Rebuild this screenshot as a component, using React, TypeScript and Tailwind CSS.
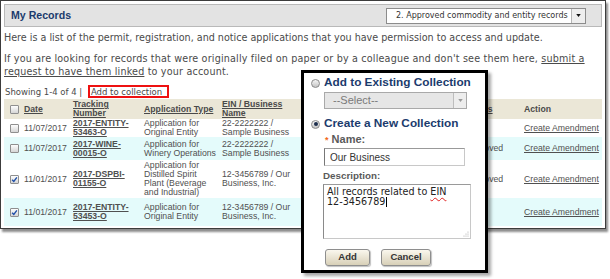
import React from 'react';

const sans = "font-['Liberation_Sans',Arial,sans-serif]";
const verd = "font-['DejaVu_Sans',Verdana,sans-serif]";

const Check = ({ on }: { on?: boolean }) => (
  <span className="inline-flex h-[9px] w-[9px] items-center justify-center rounded-[1px] border border-[#8f8f8f] bg-linear-to-b from-[#fdfdfd] to-[#d6d6d6] align-middle">
    {on && (
      <svg viewBox="0 0 8 8" className="h-[7px] w-[7px]">
        <path d="M1.3 4.3 L3.2 6.2 L6.7 1.6" stroke="#1f4fa8" strokeWidth="1.6" fill="none" />
      </svg>
    )}
  </span>
);

const Radio = ({ on }: { on?: boolean }) => (
  <span className="flex h-[9px] w-[9px] items-center justify-center rounded-full border border-[#8a8a8a] bg-linear-to-b from-[#f6f6f6] to-[#c4c4c4]">
    {on && <span className="h-[4px] w-[4px] rounded-full bg-[#1c2d4c]" />}
  </span>
);

const rows = [
  {
    date: '11/07/2017',
    track: ['2017-ENTITY-', '53463-O'],
    type: ['Application for', 'Original Entity'],
    ein: ['22-2222222 /', 'Sample Business'],
    status: '',
    on: false,
    cls: 'h-[18px] bg-white',
  },
  {
    date: '11/07/2017',
    track: ['2017-WINE-', '00015-O'],
    type: ['Application for', 'Winery Operations'],
    ein: ['22-2222222 /', 'Sample Business'],
    status: 'Approved',
    on: false,
    cls: 'h-[23px] bg-[#e4fbfb]',
  },
  {
    date: '11/01/2017',
    track: ['2017-DSPBI-', '01155-O'],
    type: ['Application for', 'Distilled Spirit', 'Plant (Beverage', 'and Industrial)'],
    ein: ['12-3456789 / Our', 'Business, Inc.'],
    status: 'Approved',
    on: true,
    cls: 'h-[38px] bg-white',
  },
  {
    date: '11/01/2017',
    track: ['2017-ENTITY-', '53453-O'],
    type: ['Application for', 'Original Entity'],
    ein: ['12-3456789 / Our', 'Business, Inc.'],
    status: '',
    on: true,
    cls: 'h-[28px] bg-[#e4fbfb]',
  },
];

const Lines = ({ items }: { items: string[] }) => (
  <>
    {items.map((t, i) => (
      <React.Fragment key={i}>
        {i > 0 && <br />}
        {t}
      </React.Fragment>
    ))}
  </>
);

export default function App() {
  return (
    <div className="relative h-[279px] w-[610px] overflow-hidden bg-white">
      {/* records page */}
      <div className="h-[229px] w-[606px] border border-[#3c3c3c] bg-white px-[3px] pt-[3px] shadow-[2px_3px_2px_rgba(0,0,0,0.45)]">
        <div className="flex h-[23px] items-center justify-between border border-[#b9b9b9] bg-[#e3e3e3] pl-[6px] pr-[15px]">
          <span className={`${sans} text-[10.6px] font-bold text-[#1b3b6d]`}>My Records</span>
          <div className="flex h-[16px] w-[200px] items-center border border-[#8c8c8c] bg-white">
            <span className={`${verd} flex-1 whitespace-nowrap pl-[9px] text-[8px] text-[#333]`}>
              2. Approved commodity and entity records
            </span>
            <span className="flex h-full w-[14px] items-center justify-center border-l border-[#b5b5b5] bg-[#eeeeee]">
              <svg viewBox="0 0 6 4" className="h-[3px] w-[5px]">
                <path d="M0 0 L6 0 L3 4 Z" fill="#111" />
              </svg>
            </span>
          </div>
        </div>

        <div className={`${verd} text-[9.6px] leading-[13px] text-[#4a4a4a]`}>
          <p className="mt-[4px] whitespace-nowrap">
            Here is a list of the permit, registration, and notice applications that you have permission to access and update.
          </p>
          <p className="mt-[8px] whitespace-nowrap tracking-[0.18px]">
            If you are looking for records that were originally filed on paper or by a colleague and don't see them here,{' '}
            <span className="underline">submit a</span>
            <br />
            <span className="underline">request to have them linked</span> to your account.
          </p>
          <p className="mt-[8px] pl-[1px] text-[8.5px]">
            Showing 1-4 of 4 |{' '}
            <span className="relative ml-[6px] underline">
              Add to collection
              <span className="absolute -left-[3px] -right-[7px] -top-[2px] -bottom-[1px] border-2 border-[#ee1111]" />
            </span>
          </p>
        </div>

        <table className={`${sans} w-[598px] table-fixed border-collapse text-[8.7px] leading-[8.8px] text-[#505050]`}>
          <colgroup>
            <col className="w-[17px]" />
            <col className="w-[49px]" />
            <col className="w-[71px]" />
            <col className="w-[78px]" />
            <col className="w-[81px]" />
            <col className="w-[163px]" />
            <col className="w-[58px]" />
            <col className="w-[81px]" />
          </colgroup>
          <thead>
            <tr className="h-[20px] bg-[#ebe7d7] text-left align-middle font-bold text-[#4a4a4a]">
              <th className="pl-[6px] text-left">
                <Check />
              </th>
              <th className="px-[3px] text-left underline">Date</th>
              <th className="px-[3px] text-left underline">
                Tracking
                <br />
                Number
              </th>
              <th className="px-[3px] text-left underline">Application Type</th>
              <th className="px-[3px] text-left underline">
                EIN / Business
                <br />
                Name
              </th>
              <th className="px-[3px]" />
              <th className="px-[3px] text-left underline">Status</th>
              <th className="px-[3px] text-left">Action</th>
            </tr>
          </thead>
          <tbody>
            {rows.map((r, i) => (
              <tr key={i} className={`${r.cls} align-middle`}>
                <td className="pl-[6px]">
                  <Check on={r.on} />
                </td>
                <td className="px-[3px]">{r.date}</td>
                <td className="px-[3px] font-bold underline">
                  <Lines items={r.track} />
                </td>
                <td className="px-[3px]">
                  <Lines items={r.type} />
                </td>
                <td className="px-[3px]">
                  <Lines items={r.ein} />
                </td>
                <td className="px-[3px]" />
                <td className="px-[3px]">{r.status}</td>
                <td className="px-[3px] underline">Create Amendment</td>
              </tr>
            ))}
          </tbody>
        </table>
      </div>

      {/* add to collection popup */}
      <div className="absolute left-[301px] top-[70px] h-[203px] w-[187px] border-[3px] border-black bg-white shadow-[3px_3px_3px_rgba(0,0,0,0.35)]">
        <div className="mt-[5px] flex h-[10px] items-center gap-[4px] pl-[7px]">
          <Radio />
          <span className={`${sans} text-[11.8px] font-bold text-[#1b3b6d]`}>Add to Existing Collection</span>
        </div>
        <div className="ml-[20px] mt-[4px] flex h-[17px] w-[143px] items-center border border-[#a9a9a9] bg-[#e6e6e6]">
          <span className={`${sans} flex-1 pl-[8px] text-[11px] text-[#7a7a7a]`}>--Select--</span>
          <span className="flex h-full w-[13px] items-center justify-center border-l border-[#bdbdbd] bg-[#ededed]">
            <svg viewBox="0 0 6 4" className="h-[3px] w-[5px]">
              <path d="M0 0 L6 0 L3 4 Z" fill="#9a9a9a" />
            </svg>
          </span>
        </div>
        <div className="mt-[10px] flex h-[10px] items-center gap-[4px] pl-[7px]">
          <Radio on />
          <span className={`${sans} text-[11.8px] font-bold text-[#1b3b6d]`}>Create a New Collection</span>
        </div>
        <div className={`${sans} ml-[21px] mt-[5px] text-[11px] font-bold leading-[11px] text-[#5a5a5a]`}>
          <span className="text-[9px] text-[#f26a1b]">*</span> Name:
        </div>
        <div className={`${sans} ml-[20px] mt-[2px] flex h-[18px] w-[141px] items-center border border-[#c8c8c8] border-l-[#777] border-t-[#999] bg-white pl-[5px] text-[10px] text-[#333]`}>
          Our Business
        </div>
        <div className={`${sans} ml-[19px] mt-[4px] text-[9.8px] font-bold leading-[11px] text-[#5a5a5a]`}>
          Description:
        </div>
        <div className={`${verd} relative ml-[19px] mt-[3px] h-[55px] w-[148px] border border-[#c8c8c8] border-l-[#8a8a8a] border-t-[#9a9a9a] bg-white pl-[3px] pt-[2px] text-[9.6px] leading-[10px] text-[#222]`}>
          All records related to{' '}
          <span className="underline decoration-[#e02020] decoration-wavy underline-offset-2">EIN</span>
          <br />
          12-3456789
          <span className="ml-[1px] inline-block h-[10px] w-px bg-black align-middle" />
          <svg viewBox="0 0 6 6" className="absolute bottom-[1px] right-[1px] h-[6px] w-[6px]">
            <circle cx="5" cy="1" r="0.6" fill="#aaa" />
            <circle cx="3" cy="3" r="0.6" fill="#aaa" />
            <circle cx="5" cy="3" r="0.6" fill="#aaa" />
            <circle cx="1" cy="5" r="0.6" fill="#aaa" />
            <circle cx="3" cy="5" r="0.6" fill="#aaa" />
            <circle cx="5" cy="5" r="0.6" fill="#aaa" />
          </svg>
        </div>
        <div className={`${sans} ml-[21px] mt-[10px] flex gap-[11px] text-[9.5px] font-bold text-[#333]`}>
          <button className="h-[17px] w-[45px] rounded-[3px] border border-[#8e8e8e] bg-linear-to-b from-[#faf7ee] to-[#d8d0b8] shadow-[1px_1px_1px_rgba(0,0,0,0.25)]">
            Add
          </button>
          <button className="h-[17px] w-[50px] rounded-[3px] border border-[#8e8e8e] bg-linear-to-b from-[#faf7ee] to-[#d8d0b8] shadow-[1px_1px_1px_rgba(0,0,0,0.25)]">
            Cancel
          </button>
        </div>
      </div>
    </div>
  );
}
